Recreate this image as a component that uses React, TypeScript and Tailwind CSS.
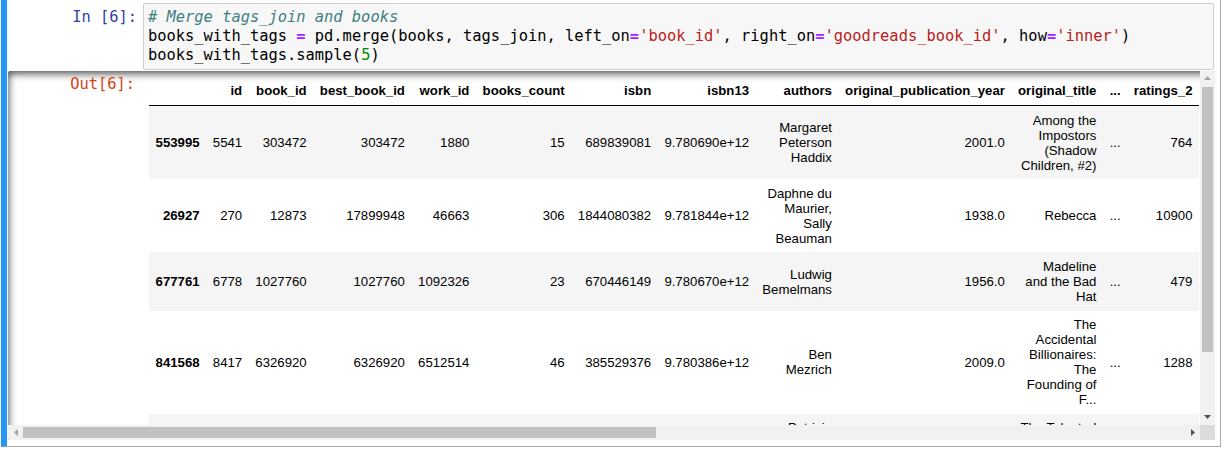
import React from 'react';

const headers = [
  'id',
  'book_id',
  'best_book_id',
  'work_id',
  'books_count',
  'isbn',
  'isbn13',
  'authors',
  'original_publication_year',
  'original_title',
  '...',
  'ratings_2',
];

const rows: { idx: string; cells: string[] }[] = [
  {
    idx: '553995',
    cells: ['5541', '303472', '303472', '1880', '15', '689839081', '9.780690e+12', 'Margaret Peterson Haddix', '2001.0', 'Among the Impostors (Shadow Children, #2)', '...', '764'],
  },
  {
    idx: '26927',
    cells: ['270', '12873', '17899948', '46663', '306', '1844080382', '9.781844e+12', 'Daphne du Maurier, Sally Beauman', '1938.0', 'Rebecca', '...', '10900'],
  },
  {
    idx: '677761',
    cells: ['6778', '1027760', '1027760', '1092326', '23', '670446149', '9.780670e+12', 'Ludwig Bemelmans', '1956.0', 'Madeline and the Bad Hat', '...', '479'],
  },
  {
    idx: '841568',
    cells: ['8417', '6326920', '6326920', '6512514', '46', '385529376', '9.780386e+12', 'Ben Mezrich', '2009.0', 'The Accidental Billionaires: The Founding of F...', '...', '1288'],
  },
  {
    idx: '180542',
    cells: ['1824', '2184', '2184', '1131093', '149', '393332144', '9.780393e+12', 'Patricia Highsmith', '1955.0', 'The Talented Mr. Ripley', '...', '1877'],
  },
];

const ScrollArrow = ({ dir, dark }: { dir: 'up' | 'down' | 'left' | 'right'; dark?: boolean }) => {
  const pts = {
    up: '3.5,0 7,4 0,4',
    down: '0,0 7,0 3.5,4',
    left: '4,0 4,7 0,3.5',
    right: '0,0 4,3.5 0,7',
  }[dir];
  const vertical = dir === 'up' || dir === 'down';
  return (
    <svg width={vertical ? 7 : 4} height={vertical ? 4 : 7} viewBox={vertical ? '0 0 7 4' : '0 0 4 7'}>
      <polygon points={pts} fill={dark ? '#505050' : '#a3a3a3'} />
    </svg>
  );
};

const App: React.FC = () => {
  return (
    <div className="w-[1225px] h-[450px] bg-white overflow-hidden pl-px">
      <div className="w-[1220px] h-[447px] border-l-[6px] border-l-[#2196f3] border-r border-b border-r-[#ababab] border-b-[#ababab] pt-[3px] flex flex-col">
        {/* input */}
        <div className="flex font-['DejaVu_Sans_Mono',monospace] text-[15.4px] leading-[18.7px]">
          <div className="w-[136px] shrink-0 pr-[6px] pt-[5.4px] text-right text-[#303f9f] whitespace-pre">In [6]:</div>
          <div className="flex-1 mr-[6px] border border-[#cfcfcf] rounded-[2px] bg-[#f7f7f7] px-[4px] py-[4.4px] whitespace-pre text-black">
            <div className="italic text-[#408080]"># Merge tags_join and books</div>
            <div>
              books_with_tags <span className="font-bold text-[#aa22ff]">=</span> pd.merge(books, tags_join, left_on
              <span className="font-bold text-[#aa22ff]">=</span>
              <span className="text-[#ba2121]">'book_id'</span>, right_on
              <span className="font-bold text-[#aa22ff]">=</span>
              <span className="text-[#ba2121]">'goodreads_book_id'</span>, how
              <span className="font-bold text-[#aa22ff]">=</span>
              <span className="text-[#ba2121]">'inner'</span>)
            </div>
            <div>
              books_with_tags.sample(<span className="text-[#008800]">5</span>)
            </div>
          </div>
        </div>

        {/* output */}
        <div className="mt-[1px] ml-[1px] mr-[5px] h-[369px] rounded-[2px] shadow-[inset_0_2px_8px_rgba(0,0,0,0.8)] flex flex-col overflow-hidden">
          <div className="flex flex-1 min-h-0">
            <div className="flex-1 min-w-0 overflow-hidden">
              <div className="flex items-start">
                <div className="w-[127px] shrink-0 pt-[4.6px] text-right text-[#d84315] font-['DejaVu_Sans_Mono',monospace] text-[15.4px] leading-[18.7px] whitespace-pre">
                  Out[6]:
                </div>
                <table className="w-min shrink-0 mt-[6px] ml-[14px] border-collapse text-black text-[13.2px] leading-[15px] font-['Liberation_Sans',Arial,sans-serif]">
                  <thead>
                    <tr>
                      <th className="px-[6.6px] py-[6.6px] border-b border-black"></th>
                      {headers.map((h) => (
                        <th key={h} className="px-[6.6px] py-[6.6px] font-bold text-right align-middle border-b border-black">
                          {h}
                        </th>
                      ))}
                    </tr>
                  </thead>
                  <tbody>
                    {rows.map((r, i) => (
                      <tr key={r.idx} className={i % 2 === 0 ? 'bg-[#f5f5f5]' : 'bg-white'}>
                        <th className="px-[6.6px] py-[6.6px] font-bold text-right align-middle">{r.idx}</th>
                        {r.cells.map((c, j) => (
                          <td key={j} className="px-[6.6px] py-[6.6px] text-right align-middle">
                            {c}
                          </td>
                        ))}
                      </tr>
                    ))}
                  </tbody>
                </table>
              </div>
            </div>
            {/* vertical scrollbar */}
            <div className="w-[15px] shrink-0 bg-[#f1f1f1] flex flex-col">
              <div className="h-[15px] flex items-center justify-center">
                <ScrollArrow dir="up" />
              </div>
              <div className="mt-[1px] mx-[2px] h-[265px] bg-[#c1c1c1]" />
              <div className="flex-1" />
              <div className="h-[15px] flex items-center justify-center">
                <ScrollArrow dir="down" dark />
              </div>
            </div>
          </div>
          {/* horizontal scrollbar */}
          <div className="flex h-[15px] shrink-0">
            <div className="flex-1 bg-[#f1f1f1] flex items-center">
              <div className="w-[15px] h-[15px] flex items-center justify-center">
                <ScrollArrow dir="left" />
              </div>
              <div className="w-[633px] h-[11px] bg-[#c1c1c1]" />
              <div className="flex-1" />
              <div className="w-[15px] h-[15px] flex items-center justify-center">
                <ScrollArrow dir="right" dark />
              </div>
            </div>
            <div className="w-[15px] bg-[#dcdcdc]" />
          </div>
        </div>
      </div>
    </div>
  );
};

export default App;
